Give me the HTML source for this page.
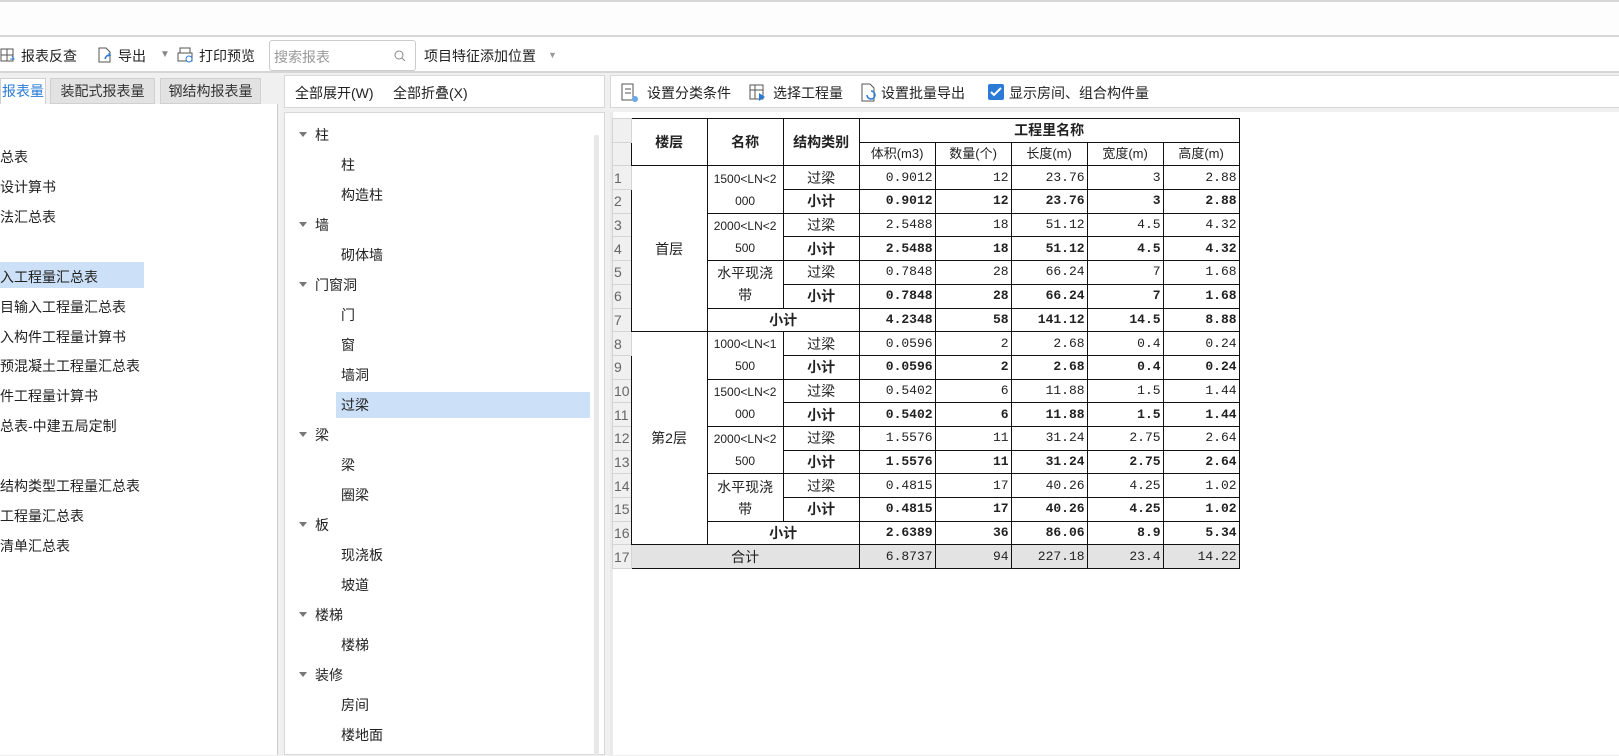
<!DOCTYPE html>
<html><head><meta charset="utf-8">
<style>
*{margin:0;padding:0;box-sizing:border-box}
body{width:1619px;height:755px;overflow:hidden;background:#f0f0f0;font-family:"Liberation Sans","Noto Sans CJK SC",sans-serif;font-size:14px;color:#222;position:relative}
.a{position:absolute}
.top{left:0;top:0;width:1619px;height:37px;background:#fdfdfd;border-top:2px solid #d8d8d8;border-bottom:2px solid #d6d6d6}
.tb{left:0;top:37px;width:1619px;height:36px;background:#fff;border-bottom:2px solid #d6d6d6}
.tb span{position:absolute;top:9px;white-space:nowrap}
.tab{top:78px;height:26px;background:#e2e2e2;border:1px solid #d0d0d0;text-align:center;line-height:24px;font-size:14px;color:#333}
.lp{left:0;top:104px;width:278px;height:651px;background:#fff;border-right:1px solid #ccc}
.li{position:absolute;left:0;font-size:14px;white-space:nowrap;height:26px;line-height:26px}
.mh{left:284px;top:75px;width:321px;height:33px;background:#fff;border:1px solid #d8d8d8}
.mp{left:284px;top:112px;width:321px;height:643px;background:#fff;border:1px solid #d8d8d8}
.ti{position:absolute;font-size:14px;white-space:nowrap;height:26px;line-height:26px}
.arr{position:absolute;width:0;height:0;border-left:4px solid transparent;border-right:4px solid transparent;border-top:5px solid #777}
.rh{left:610px;top:75px;width:1009px;height:33px;background:#fff;border:1px solid #d8d8d8;border-right:none}
.rp{left:610px;top:112px;width:1009px;height:643px;background:#fff}
table{position:absolute;left:612px;top:118px;border-collapse:collapse;table-layout:fixed;font-family:"Liberation Mono","Noto Sans CJK SC",monospace;font-size:13px}
td{border:1px solid #111;height:23.7px;padding:0 2px;white-space:nowrap;overflow:hidden;line-height:20px}
td.n{border:1px solid #d4d4d4;background:#f0f0f0;color:#666;font-family:"Liberation Sans",sans-serif;font-size:14px;padding:0 1px;text-align:left}
td.r{text-align:right}
td.c{text-align:center;font-family:"Liberation Sans","Noto Sans CJK SC",sans-serif}
tr.b td.r{font-weight:bold}
td.k{font-weight:bold;text-align:center;font-family:"Liberation Sans","Noto Sans CJK SC",sans-serif;font-size:14px}
td.h{font-weight:bold;text-align:center;font-family:"Liberation Sans","Noto Sans CJK SC",sans-serif;font-size:14px}
td.nm{text-align:center;font-size:12px;line-height:22px;white-space:normal;word-break:break-all;padding:0 5px;font-family:"Liberation Sans","Noto Sans CJK SC",sans-serif}
td.g{background:#e3e3e3}
</style></head><body>
<div class="a top"></div>
<div class="a tb">
<svg class="a" style="left:0;top:10px" width="16" height="16"><rect x="1" y="2" width="12" height="12" fill="none" stroke="#555"/><line x1="1" y1="8" x2="13" y2="8" stroke="#555"/><line x1="7" y1="2" x2="7" y2="14" stroke="#555"/><path d="M10 12 l4 0 l-2 -3" stroke="#2b7bd6" fill="none"/></svg>
<span style="left:21px">报表反查</span>
<svg class="a" style="left:96px;top:9px" width="18" height="18"><path d="M3 2 h7 l4 4 v10 h-11z" fill="none" stroke="#555"/><path d="M9 13 q1 -4 5 -4 l-1 -2 m1 2 l-2 1" stroke="#2b7bd6" fill="none" stroke-width="1.5"/></svg>
<span style="left:118px">导出</span><span style="left:160px;color:#888;font-size:10px;top:12px">▼</span>
<svg class="a" style="left:177px;top:9px" width="18" height="18"><rect x="3" y="2" width="10" height="5" fill="none" stroke="#555"/><rect x="1" y="7" width="14" height="8" fill="none" stroke="#555"/><circle cx="12" cy="13" r="3" fill="#fff" stroke="#2b7bd6"/></svg>
<span style="left:199px">打印预览</span>
<div class="a" style="left:269px;top:3px;width:147px;height:31px;border:1px solid #ccc;border-radius:3px;background:#fff"><span style="left:4px;top:6px;color:#999">搜索报表</span><svg class="a" style="left:124px;top:9px" width="12" height="12"><circle cx="5" cy="5" r="4" fill="none" stroke="#888"/><line x1="8" y1="8" x2="11" y2="11" stroke="#888"/></svg></div>
<span style="left:424px">项目特征添加位置</span><span style="left:548px;color:#999;font-size:9px;top:13px">▼</span>
</div>
<div class="a tab" style="left:0;width:46px;background:#fff;color:#2b7bd6;border-bottom:none">报表量</div>
<div class="a tab" style="left:50px;width:105px">装配式报表量</div>
<div class="a tab" style="left:160px;width:101px">钢结构报表量</div>
<div class="a lp">
<div class="a" style="left:0;top:158px;width:144px;height:26px;background:#cce0f7"></div>
<div class="li" style="top:40px">总表</div>
<div class="li" style="top:70px">设计算书</div>
<div class="li" style="top:100px">法汇总表</div>
<div class="li" style="top:160px">入工程量汇总表</div>
<div class="li" style="top:190px">目输入工程量汇总表</div>
<div class="li" style="top:220px">入构件工程量计算书</div>
<div class="li" style="top:249px">预混凝土工程量汇总表</div>
<div class="li" style="top:279px">件工程量计算书</div>
<div class="li" style="top:309px">总表-中建五局定制</div>
<div class="li" style="top:369px">结构类型工程量汇总表</div>
<div class="li" style="top:399px">工程量汇总表</div>
<div class="li" style="top:429px">清单汇总表</div>
</div>
<div class="a mh"><span class="a" style="left:10px;top:7px">全部展开(W)</span><span class="a" style="left:108px;top:7px">全部折叠(X)</span></div>
<div class="a mp">
<div class="a" style="left:51px;top:279px;width:254px;height:26px;background:#cce0f7"></div>
<div class="a" style="left:309px;top:22px;width:5px;height:621px;background:#e8e8e8;border-radius:2px"></div>
<div class="arr" style="left:14px;top:19px"></div><div class="ti" style="left:30px;top:9px">柱</div>
<div class="ti" style="left:56px;top:39px">柱</div>
<div class="ti" style="left:56px;top:69px">构造柱</div>
<div class="arr" style="left:14px;top:109px"></div><div class="ti" style="left:30px;top:99px">墙</div>
<div class="ti" style="left:56px;top:129px">砌体墙</div>
<div class="arr" style="left:14px;top:169px"></div><div class="ti" style="left:30px;top:159px">门窗洞</div>
<div class="ti" style="left:56px;top:189px">门</div>
<div class="ti" style="left:56px;top:219px">窗</div>
<div class="ti" style="left:56px;top:249px">墙洞</div>
<div class="ti" style="left:56px;top:279px">过梁</div>
<div class="arr" style="left:14px;top:319px"></div><div class="ti" style="left:30px;top:309px">梁</div>
<div class="ti" style="left:56px;top:339px">梁</div>
<div class="ti" style="left:56px;top:369px">圈梁</div>
<div class="arr" style="left:14px;top:409px"></div><div class="ti" style="left:30px;top:399px">板</div>
<div class="ti" style="left:56px;top:429px">现浇板</div>
<div class="ti" style="left:56px;top:459px">坡道</div>
<div class="arr" style="left:14px;top:499px"></div><div class="ti" style="left:30px;top:489px">楼梯</div>
<div class="ti" style="left:56px;top:519px">楼梯</div>
<div class="arr" style="left:14px;top:559px"></div><div class="ti" style="left:30px;top:549px">装修</div>
<div class="ti" style="left:56px;top:579px">房间</div>
<div class="ti" style="left:56px;top:609px">楼地面</div>
</div>
<div class="a rh">
<svg class="a" style="left:10px;top:7px" width="18" height="20"><rect x="1" y="1" width="11" height="16" fill="none" stroke="#555"/><line x1="4" y1="6" x2="10" y2="6" stroke="#555"/><line x1="4" y1="10" x2="10" y2="10" stroke="#555"/><circle cx="14" cy="16" r="3" fill="#6aa9e8"/></svg>
<span class="a" style="left:36px;top:7px">设置分类条件</span>
<svg class="a" style="left:138px;top:7px" width="18" height="20"><rect x="1" y="2" width="13" height="14" fill="none" stroke="#555"/><line x1="1" y1="7" x2="14" y2="7" stroke="#555"/><line x1="6" y1="2" x2="6" y2="16" stroke="#555"/><path d="M10 10 l6 4 l-6 4z" fill="#2b7bd6"/></svg>
<span class="a" style="left:162px;top:7px">选择工程量</span>
<svg class="a" style="left:248px;top:7px" width="18" height="20"><path d="M3 1 h8 l4 4 v13 h-12z" fill="none" stroke="#555"/><path d="M8 12 a4 4 0 1 0 4 -4" stroke="#2b7bd6" fill="none" stroke-width="1.5"/></svg>
<span class="a" style="left:270px;top:7px">设置批量导出</span>
<div class="a" style="left:377px;top:8px;width:16px;height:16px;background:#2b7bd6;border-radius:2px"><svg width="16" height="16"><path d="M3 8 l3 3 l7 -7" stroke="#fff" stroke-width="2" fill="none"/></svg></div>
<span class="a" style="left:398px;top:7px">显示房间、组合构件量</span>
</div>
<div class="a rp"></div>
<div class="a" style="left:610px;top:112px;width:3px;height:643px;background:#eaeaea"></div>
<table>
<colgroup><col style="width:17px"><col style="width:76px"><col style="width:76px"><col style="width:76px"><col style="width:76px"><col style="width:76px"><col style="width:76px"><col style="width:76px"><col style="width:76px"></colgroup>
<tr><td class="n" style="height:22px"></td><td class="h" rowspan="2">楼层</td><td class="h" rowspan="2">名称</td><td class="h" rowspan="2">结构类别</td><td class="h" colspan="5">工程里名称</td></tr>
<tr><td class="n" style="height:23px"></td><td class="c">体积(m3)</td><td class="c">数量(个)</td><td class="c">长度(m)</td><td class="c">宽度(m)</td><td class="c">高度(m)</td></tr>
<tr><td class="n">1</td><td class="c" rowspan="7" style="font-size:14px">首层</td><td class="nm" rowspan="2">1500&lt;LN&lt;2000</td><td class="c" style="font-size:14px">过梁</td><td class="r">0.9012</td><td class="r">12</td><td class="r">23.76</td><td class="r">3</td><td class="r">2.88</td></tr>
<tr class="b"><td class="n">2</td><td class="k">小计</td><td class="r">0.9012</td><td class="r">12</td><td class="r">23.76</td><td class="r">3</td><td class="r">2.88</td></tr>
<tr><td class="n">3</td><td class="nm" rowspan="2">2000&lt;LN&lt;2500</td><td class="c" style="font-size:14px">过梁</td><td class="r">2.5488</td><td class="r">18</td><td class="r">51.12</td><td class="r">4.5</td><td class="r">4.32</td></tr>
<tr class="b"><td class="n">4</td><td class="k">小计</td><td class="r">2.5488</td><td class="r">18</td><td class="r">51.12</td><td class="r">4.5</td><td class="r">4.32</td></tr>
<tr><td class="n">5</td><td class="nm" rowspan="2" style="font-size:14px">水平现浇带</td><td class="c" style="font-size:14px">过梁</td><td class="r">0.7848</td><td class="r">28</td><td class="r">66.24</td><td class="r">7</td><td class="r">1.68</td></tr>
<tr class="b"><td class="n">6</td><td class="k">小计</td><td class="r">0.7848</td><td class="r">28</td><td class="r">66.24</td><td class="r">7</td><td class="r">1.68</td></tr>
<tr class="b"><td class="n">7</td><td class="k" colspan="2">小计</td><td class="r">4.2348</td><td class="r">58</td><td class="r">141.12</td><td class="r">14.5</td><td class="r">8.88</td></tr>
<tr><td class="n">8</td><td class="c" rowspan="9" style="font-size:14px">第2层</td><td class="nm" rowspan="2">1000&lt;LN&lt;1500</td><td class="c" style="font-size:14px">过梁</td><td class="r">0.0596</td><td class="r">2</td><td class="r">2.68</td><td class="r">0.4</td><td class="r">0.24</td></tr>
<tr class="b"><td class="n">9</td><td class="k">小计</td><td class="r">0.0596</td><td class="r">2</td><td class="r">2.68</td><td class="r">0.4</td><td class="r">0.24</td></tr>
<tr><td class="n">10</td><td class="nm" rowspan="2">1500&lt;LN&lt;2000</td><td class="c" style="font-size:14px">过梁</td><td class="r">0.5402</td><td class="r">6</td><td class="r">11.88</td><td class="r">1.5</td><td class="r">1.44</td></tr>
<tr class="b"><td class="n">11</td><td class="k">小计</td><td class="r">0.5402</td><td class="r">6</td><td class="r">11.88</td><td class="r">1.5</td><td class="r">1.44</td></tr>
<tr><td class="n">12</td><td class="nm" rowspan="2">2000&lt;LN&lt;2500</td><td class="c" style="font-size:14px">过梁</td><td class="r">1.5576</td><td class="r">11</td><td class="r">31.24</td><td class="r">2.75</td><td class="r">2.64</td></tr>
<tr class="b"><td class="n">13</td><td class="k">小计</td><td class="r">1.5576</td><td class="r">11</td><td class="r">31.24</td><td class="r">2.75</td><td class="r">2.64</td></tr>
<tr><td class="n">14</td><td class="nm" rowspan="2" style="font-size:14px">水平现浇带</td><td class="c" style="font-size:14px">过梁</td><td class="r">0.4815</td><td class="r">17</td><td class="r">40.26</td><td class="r">4.25</td><td class="r">1.02</td></tr>
<tr class="b"><td class="n">15</td><td class="k">小计</td><td class="r">0.4815</td><td class="r">17</td><td class="r">40.26</td><td class="r">4.25</td><td class="r">1.02</td></tr>
<tr class="b"><td class="n">16</td><td class="k" colspan="2">小计</td><td class="r">2.6389</td><td class="r">36</td><td class="r">86.06</td><td class="r">8.9</td><td class="r">5.34</td></tr>
<tr><td class="n">17</td><td class="c g" colspan="3" style="font-size:14px">合计</td><td class="r g">6.8737</td><td class="r g">94</td><td class="r g">227.18</td><td class="r g">23.4</td><td class="r g">14.22</td></tr>
</table>
</body></html>
